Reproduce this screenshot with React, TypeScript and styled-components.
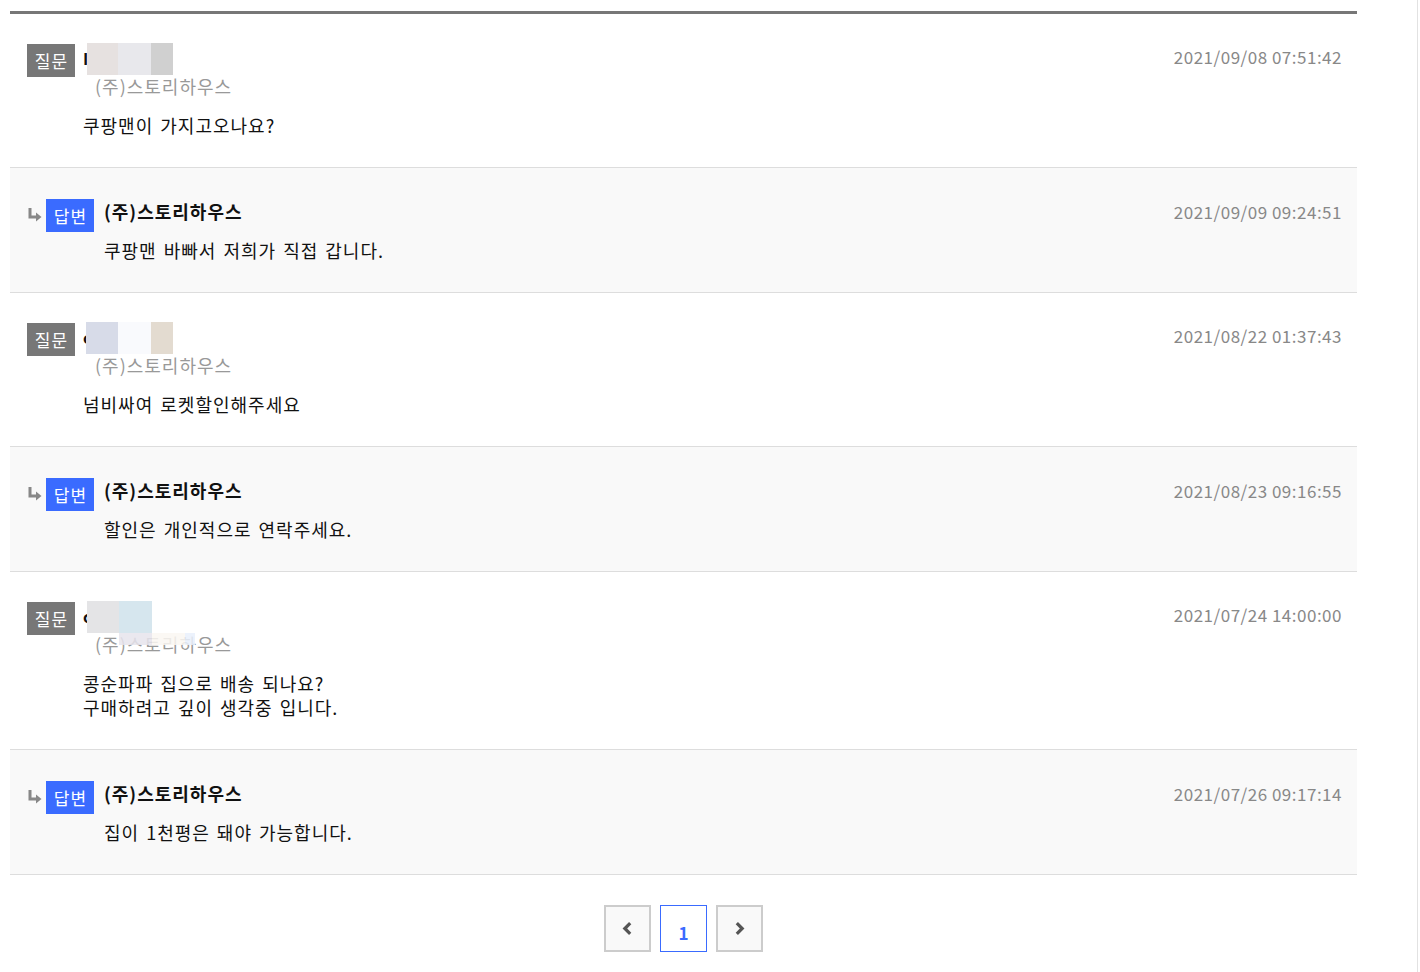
import * as React from "react";
import styled, { createGlobalStyle } from "styled-components";

type Blur = { x: number; y: number; w: number; h: number; c: string };

type Item = {
    kind: "q" | "a";
    head?: string;
    blurs?: Blur[];
    lines: string[];
    date: string;
};

const items: Item[] = [
    {
        kind: "q",
        head: "I",
        blurs: [
            { x: 4, y: 0, w: 31, h: 32, c: "#e6e1e0" },
            { x: 35, y: 0, w: 33, h: 32, c: "#e8e8ec" },
            { x: 68, y: 0, w: 22, h: 32, c: "#d0d0d0" },
        ],
        lines: ["쿠팡맨이 가지고오나요?"],
        date: "2021/09/08 07:51:42",
    },
    { kind: "a", lines: ["쿠팡맨 바빠서 저희가 직접 갑니다."], date: "2021/09/09 09:24:51" },
    {
        kind: "q",
        head: "c",
        blurs: [
            { x: 3, y: 0, w: 32, h: 32, c: "#d7dbe8" },
            { x: 35, y: 0, w: 33, h: 32, c: "#f9fafd" },
            { x: 68, y: 0, w: 22, h: 32, c: "#e3dbd0" },
        ],
        lines: ["넘비싸여 로켓할인해주세요"],
        date: "2021/08/22 01:37:43",
    },
    { kind: "a", lines: ["할인은 개인적으로 연락주세요."], date: "2021/08/23 09:16:55" },
    {
        kind: "q",
        head: "c",
        blurs: [
            { x: 4, y: 0, w: 32, h: 32, c: "#e4e4e6" },
            { x: 36, y: 0, w: 33, h: 32, c: "#d6e6ee" },
            { x: 36, y: 32, w: 33, h: 12, c: "rgba(230,228,236,0.85)" },
            { x: 69, y: 32, w: 33, h: 12, c: "rgba(250,247,242,0.85)" },
            { x: 102, y: 32, w: 10, h: 12, c: "rgba(233,240,251,0.85)" },
        ],
        lines: ["콩순파파 집으로 배송 되나요?", "구매하려고 깊이 생각중 입니다."],
        date: "2021/07/24 14:00:00",
    },
    { kind: "a", lines: ["집이 1천평은 돼야 가능합니다."], date: "2021/07/26 09:17:14" },
];

const GlobalStyle = createGlobalStyle`
    html, body {
        margin: 0;
        padding: 0;
        background: #fff;
        font-family: "Noto Sans CJK KR", "Noto Sans", sans-serif;
        color: #222;
    }
`;

const Page = styled.div`
    width: 1418px;
    min-height: 100vh;
    border-right: 1px solid #e2e2e2;
    padding: 11px 0 0 10px;
    box-sizing: border-box;
`;

const Board = styled.div`
    width: 1347px;
    border-top: 3px solid #777;
`;

const Row = styled.div<{ $answer?: boolean }>`
    display: flex;
    flex-direction: column;
    padding: ${(p) => (p.$answer ? "31px 15px 30px 17px" : "30px 15px 30px 17px")};
    background: ${(p) => (p.$answer ? "#f9f9f9" : "#fff")};
    border-bottom: 1px solid #ddd;
`;

const Head = styled.div`
    display: flex;
    align-items: flex-start;
`;

const Badge = styled.span<{ $answer?: boolean }>`
    flex: none;
    width: 48px;
    height: 33px;
    display: flex;
    align-items: center;
    justify-content: center;
    background: ${(p) => (p.$answer ? "#3a6bff" : "#777")};
    color: #fff;
    font-size: 17px;
    letter-spacing: 1px;
    text-indent: 1px;
`;

const Who = styled.div`
    flex: 1;
    margin-left: 8px;
    margin-top: -1px;
    position: relative;
`;

const NameLine = styled.div`
    height: 32px;
    font-size: 16px;
    font-weight: 700;
    line-height: 30px;
    color: #111;
    position: relative;
`;

const BlurBox = styled.span`
    position: absolute;
`;

const Company = styled.div`
    margin-left: 12px;
    font-size: 18px;
    line-height: 22px;
    letter-spacing: 1px;
    color: #999;
`;

const Writer = styled.div`
    flex: 1;
    margin-left: 10px;
    font-size: 18px;
    font-weight: 700;
    line-height: 24px;
    letter-spacing: 1px;
    color: #111;
`;

const Date = styled.div`
    margin-top: 1px;
    font-size: 17px;
    line-height: 24px;
    letter-spacing: 0.5px;
    color: #888;
`;

const Arrow = styled.svg`
    flex: none;
    width: 15px;
    height: 15px;
    margin: 8px 4px 0 0;
`;

const Content = styled.div<{ $answer?: boolean }>`
    margin: ${(p) => (p.$answer ? "6px 0 0 77px" : "16px 0 0 56px")};
    font-size: 18px;
    line-height: 24px;
    letter-spacing: 1px;
    word-spacing: 2px;
    color: #111;
`;

const Pager = styled.div`
    display: flex;
    justify-content: center;
    gap: 9px;
    margin-top: 30px;
`;

const PageBtn = styled.button<{ $active?: boolean }>`
    width: 47px;
    height: 47px;
    box-sizing: border-box;
    display: flex;
    align-items: center;
    justify-content: center;
    padding: 0;
    background: ${(p) => (p.$active ? "#fff" : "#f9f9f9")};
    border: ${(p) => (p.$active ? "1px solid #3a6bff" : "2px solid #ccc")};
    color: #3a6bff;
    font-family: "Noto Sans CJK KR", sans-serif;
    font-size: 17px;
    font-weight: 700;
    padding-top: ${(p) => (p.$active ? "7px" : "0")};
`;

const Chevron = ({ dir }: { dir: "l" | "r" }) => (
    <svg width="13" height="15" viewBox="0 0 12 14">
        <path
            d={dir === "l" ? "M8.5 2 L3.5 7 L8.5 12" : "M3.5 2 L8.5 7 L3.5 12"}
            fill="none"
            stroke="#555"
            strokeWidth="3"
        />
    </svg>
);

const Question = ({ item }: { item: Item }) => (
    <Row>
        <Head>
            <Badge>질문</Badge>
            <Who>
                <NameLine>
                    {item.head}
                    {item.blurs?.map((b, i) => (
                        <BlurBox key={i} style={{ left: b.x, top: b.y, width: b.w, height: b.h, background: b.c }} />
                    ))}
                </NameLine>
                <Company>(주)스토리하우스</Company>
            </Who>
            <Date>{item.date}</Date>
        </Head>
        <Content>
            {item.lines.map((l, i) => (
                <div key={i}>{l}</div>
            ))}
        </Content>
    </Row>
);

const Answer = ({ item }: { item: Item }) => (
    <Row $answer>
        <Head>
            <Arrow viewBox="0 0 15 15">
                <path d="M3 1 V10 H10" fill="none" stroke="#888" strokeWidth="3" />
                <path d="M9 5.5 L14.5 10 L9 14.5 Z" fill="#888" />
            </Arrow>
            <Badge $answer>답변</Badge>
            <Writer>(주)스토리하우스</Writer>
            <Date>{item.date}</Date>
        </Head>
        <Content $answer>
            {item.lines.map((l, i) => (
                <div key={i}>{l}</div>
            ))}
        </Content>
    </Row>
);

const App: React.FC = () => {
    return (
        <Page>
            <GlobalStyle />
            <Board>
                {items.map((it, i) =>
                    it.kind === "q" ? <Question key={i} item={it} /> : <Answer key={i} item={it} />
                )}
                <Pager>
                    <PageBtn>
                        <Chevron dir="l" />
                    </PageBtn>
                    <PageBtn $active>1</PageBtn>
                    <PageBtn>
                        <Chevron dir="r" />
                    </PageBtn>
                </Pager>
            </Board>
        </Page>
    );
};

export default App;
